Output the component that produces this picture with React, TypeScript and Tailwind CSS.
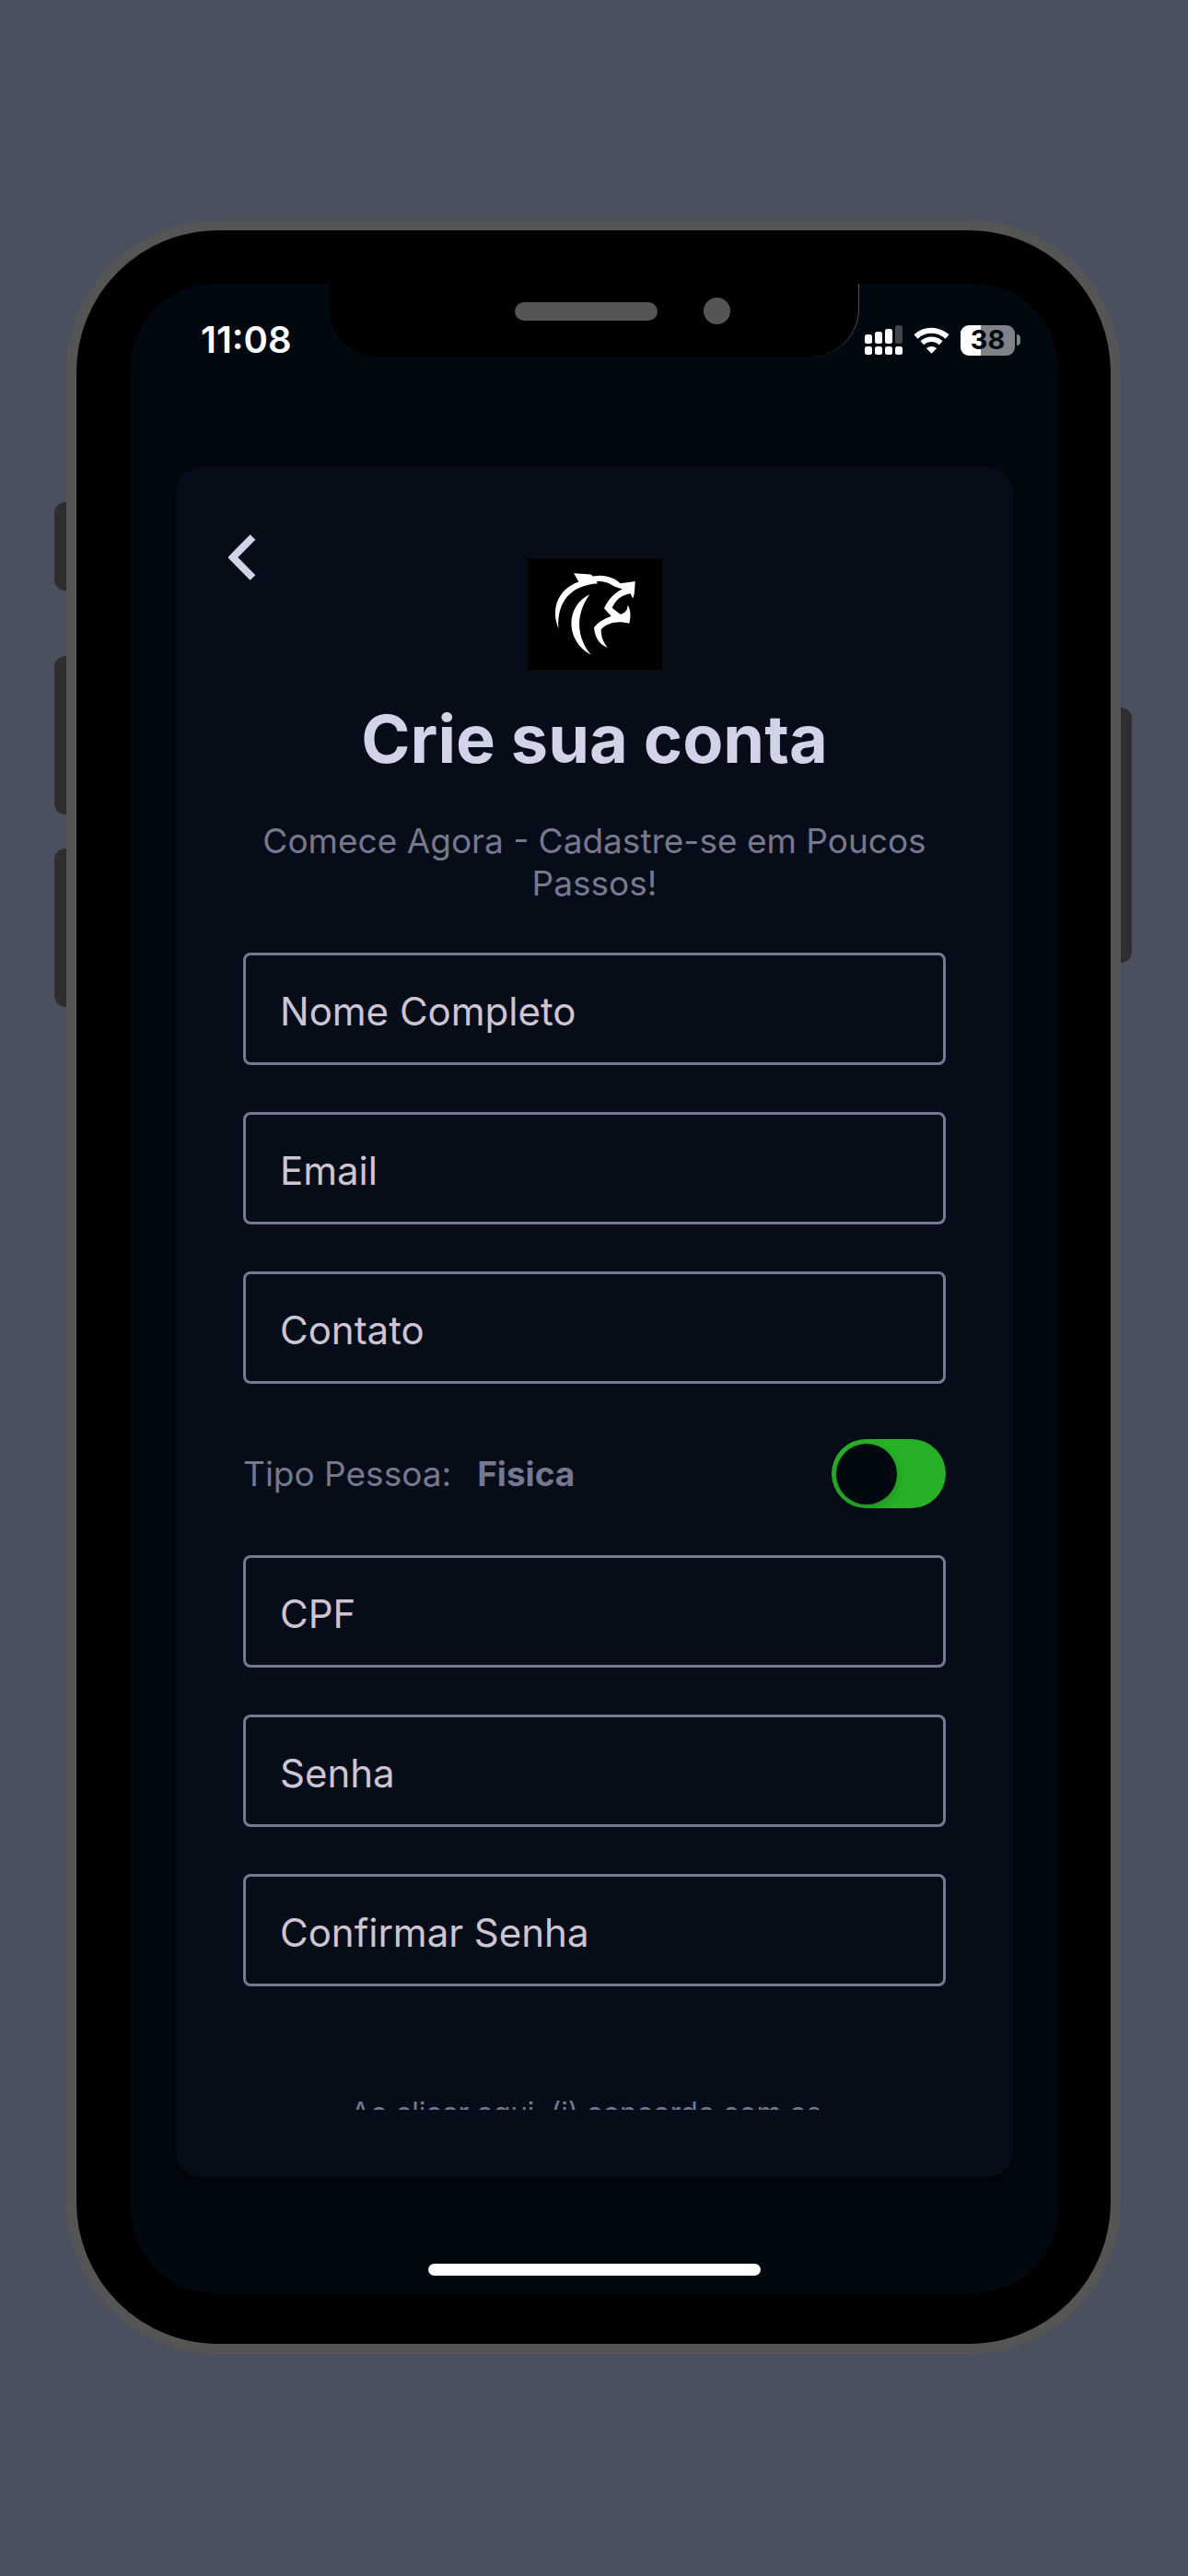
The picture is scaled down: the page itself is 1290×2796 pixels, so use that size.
import { useState } from "react";

const topFields = [
  { id: "nome", label: "Nome Completo", type: "text" },
  { id: "email", label: "Email", type: "email" },
  { id: "contato", label: "Contato", type: "tel" },
];

const bottomFields = [
  { id: "cpf", label: "CPF", type: "text" },
  { id: "senha", label: "Senha", type: "password" },
  { id: "confirmar", label: "Confirmar Senha", type: "password" },
];

function Field({ id, label, type }: { id: string; label: string; type: string }) {
  return (
    <input
      id={id}
      name={id}
      type={type}
      aria-label={label}
      placeholder={label}
      className="block h-[122px] w-full rounded-lg border-3 border-[#77788f] bg-transparent px-[37px] pt-1 text-[42px] text-[#cdc5d4] outline-none placeholder:text-[#cdc5d4]"
    />
  );
}

function Logo() {
  return (
    <svg
      viewBox="96 77 438 364"
      className="mt-[26px] h-[121px] w-[146px] bg-black"
      fill="#fff"
      role="img"
      aria-label="Logo"
    >
      <path d="M246 126 L301 130 L309 136 C345 128 378 140 398 159 L447 152 C444 168 447 190 439 208 L431 192 C400 196 382 215 371 239 L398 260 C414 256 422 246 422 230 C432 242 433 268 427 290 C390 279 352 288 335 310 C335 335 344 354 357 368 C330 360 315 335 312 303 C326 285 345 275 368 266 L345 240 C360 210 378 190 405 178 L378 169 C360 155 340 151 320 152 L324 159 C240 165 190 215 196 306 C172 250 188 180 262 154 Z" />
      <path d="M298 195 C220 230 215 345 302 392 C255 335 250 260 298 195 Z" />
    </svg>
  );
}

function StatusBar() {
  return (
    <div className="flex h-[122px] items-center justify-between pr-[41px] pl-[76px]">
      <span className="text-[40px] font-semibold text-white">11:08</span>
      <div className="flex items-center gap-3">
        <svg viewBox="0 0 41 32" className="h-8 w-[41px]" fill="#fff">
          <rect x="0" y="10" width="8" height="10" rx="2.5" />
          <rect x="11" y="7" width="8" height="13" rx="2.5" />
          <rect x="22" y="4" width="8" height="16" rx="2.5" />
          <rect x="33" y="0" width="8" height="20" rx="2.5" opacity=".25" />
          <rect x="0" y="23" width="8" height="9" rx="2.5" />
          <rect x="11" y="23" width="8" height="9" rx="2.5" />
          <rect x="22" y="23" width="8" height="9" rx="2.5" />
          <rect x="33" y="23" width="8" height="9" rx="2.5" />
        </svg>
        <svg viewBox="0 0 39 29" className="h-[29px] w-[39px]" fill="none" stroke="#fff">
          <path d="M2.5 10.5 A25 25 0 0 1 36.5 10.5" strokeWidth="6" />
          <path d="M9.3 17.3 A15 15 0 0 1 29.7 17.3" strokeWidth="5.6" />
          <path d="M13.8 23 Q19.5 19.2 25.2 23 L19.5 28.8 Z" fill="#fff" stroke="none" />
        </svg>
        <div className="flex items-center gap-0.5">
          <div className="flex h-[33px] w-[59px] items-center justify-center rounded-[9px] bg-linear-to-r from-white from-38% to-[#7f8287] to-38% text-[29px] font-bold text-[#01080f]">
            38
          </div>
          <div className="h-3 w-1 rounded-r-full bg-[#7f8287]" />
        </div>
      </div>
    </div>
  );
}

export default function App() {
  const [fisica, setFisica] = useState(true);

  return (
    <div className="min-h-screen bg-[#4a505e] pt-[239px] pr-[73px] pb-[241px] pl-[72px] font-['Inter',sans-serif]">
      {/* Phone body */}
      <div className="relative mx-auto max-w-[1145px] rounded-[165px] border-11 border-[#555] bg-black pt-[58px] pr-[57px] pb-[55px] pl-[59px]">
        {/* Side buttons */}
        <div className="absolute top-[295px] -left-6 h-24 w-[13px] rounded-l-xl bg-[#2e2e2e]" />
        <div className="absolute top-[462px] -left-6 h-[172px] w-[13px] rounded-l-xl bg-[#2e2e2e]" />
        <div className="absolute top-[671px] -left-6 h-[172px] w-[13px] rounded-l-xl bg-[#2e2e2e]" />
        <div className="absolute top-[518px] -right-[23px] h-[277px] w-3 rounded-r-xl bg-[#2e2e2e]" />

        <div className="relative rounded-[92px] bg-[#01080f] pb-[19px]">
          {/* Notch */}
          <div className="absolute inset-x-[216px] top-0 flex h-[79px] justify-center rounded-b-[52px] border-r border-[#4a505e] bg-black pt-[15px]">
            <div className="flex h-[29px] items-center gap-[50px] pl-[62px]">
              <div className="h-5 w-[155px] rounded-full bg-[#555]" />
              <div className="size-[29px] rounded-full bg-[#555]" />
            </div>
          </div>

          <StatusBar />

          <main className="mx-[49px] mt-[77px] rounded-[28px] bg-[#060d18] px-12 py-[73px] shadow-[0_3px_12px_rgba(0,0,0,0.6)]">
            <form className="h-[1710px] overflow-y-auto px-[25px] text-center [scrollbar-width:none]">
              <div className="grid grid-cols-[1fr_auto_1fr] items-start">
                <button type="button" aria-label="Voltar" className="-ml-4 w-fit">
                  <svg viewBox="0 0 48 50" className="h-[50px] w-12" fill="none" stroke="#d2d2e8" strokeWidth="8">
                    <path d="M26.5 3 L4.8 25 L26.5 47" />
                  </svg>
                </button>
                <Logo />
              </div>

              <h1 className="mt-[35px] text-[72px] leading-[80px] font-bold text-[#d2d2e8]">
                Crie sua conta
              </h1>
              <p className="mt-12 text-[37px] leading-[46px] text-[#77788f]">
                Comece Agora - Cadastre-se em Poucos Passos!
              </p>

              <div className="mt-[52px] flex flex-col gap-[51px]">
                {topFields.map((field) => (
                  <Field key={field.id} {...field} />
                ))}

                <div className="flex items-center justify-between pt-[9px] text-[37px] text-[#77788f]">
                  <label htmlFor="tipo" className="flex gap-7">
                    Tipo Pessoa: <strong>{fisica ? "Fisica" : "Juridica"}</strong>
                  </label>
                  <input
                    id="tipo"
                    type="checkbox"
                    role="switch"
                    checked={fisica}
                    onChange={(e) => setFisica(e.target.checked)}
                    className="flex h-[75px] w-[124px] appearance-none items-center justify-end rounded-full bg-[#28b128] px-[5px] before:size-[66px] before:rounded-full before:bg-[#01080f] before:shadow-[0_4px_12px_rgba(0,0,0,0.2)] checked:justify-start"
                  />
                </div>

                {bottomFields.map((field) => (
                  <Field key={field.id} {...field} />
                ))}
              </div>

              <p className="mt-[117px] pr-[118px] pl-[100px] text-[31px] leading-10 text-[#77788f]">
                Ao clicar aqui, (i) concordo com os
              </p>
            </form>
          </main>

          {/* Home indicator */}
          <div className="mx-auto mt-[94px] h-[13px] w-[361px] rounded-full bg-white" />
        </div>
      </div>
    </div>
  );
}
